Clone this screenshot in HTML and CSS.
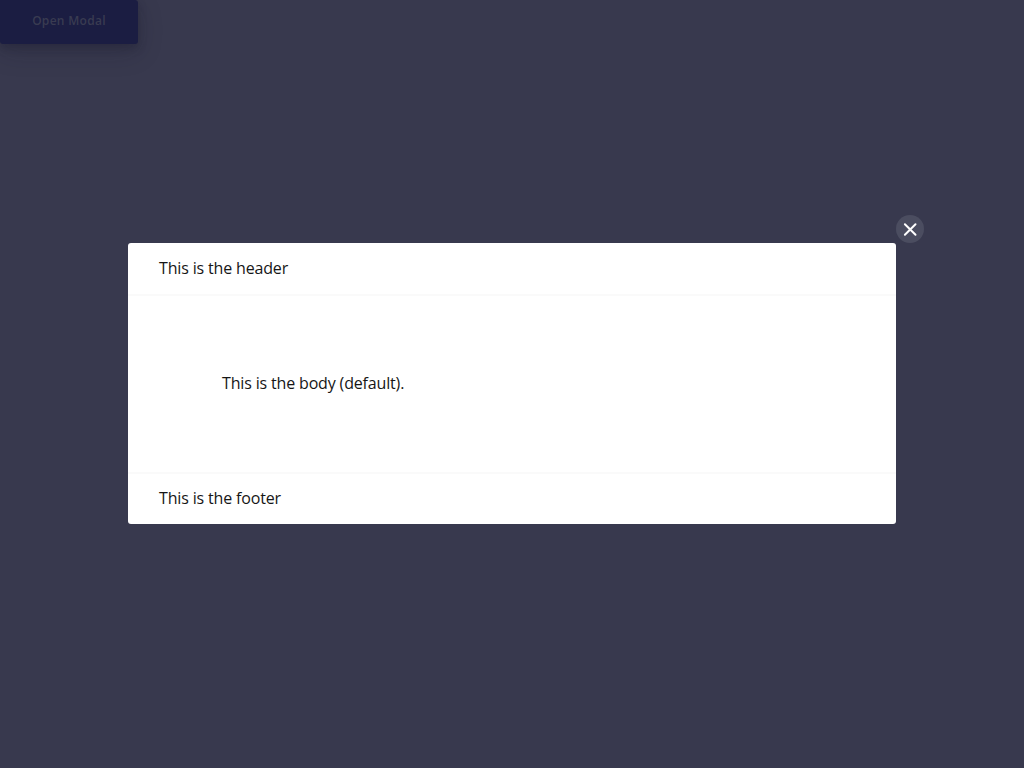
FILE: index.html
```html
<!DOCTYPE html>
<html lang="en">
<head>
<meta charset="utf-8">
<title>Modal</title>
<link rel="stylesheet" href="styles.css">
</head>
<body>
<button class="open-button">Open Modal</button>
<div class="backdrop">
  <div class="modal" role="dialog">
    <button class="close" aria-label="Close">
      <svg class="close-icon" viewBox="0 0 28 28"><path d="M8.9 9.2l10.6 10.6M19.5 9.2L8.9 19.8"/></svg>
    </button>
    <header class="modal-header">This is the header</header>
    <div class="modal-body">This is the body (default).</div>
    <footer class="modal-footer">This is the footer</footer>
  </div>
</div>
</body>
</html>
```

FILE: styles.css
```css
* { box-sizing: border-box; }
body {
  margin: 0;
  min-height: 100vh;
  background: #38394e;
  color: #161616;
  font: 16px/20px "Open Sans", "Noto Sans", sans-serif;
  letter-spacing: -.16px;
}
.open-button {
  display: block;
  width: 138px;
  height: 44px;
  padding: 0 0 3px;
  border: 0;
  border-radius: 0 3px 3px 3px;
  background: #1b1d42;
  color: #393b51;
  font: 600 12px/20px "Open Sans", sans-serif;
  letter-spacing: .3px;
  box-shadow: 0 4px 8px rgba(20, 20, 40, .25), 0 8px 26px rgba(20, 20, 40, .2);
}
.backdrop {
  position: fixed;
  inset: 0;
  display: flex;
  align-items: center;
  justify-content: center;
  padding-bottom: 1px;
}
.modal {
  position: relative;
  width: 768px;
  height: 281px;
  display: flex;
  flex-direction: column;
  border-radius: 3px;
  background: #fff;
}
.modal-header { padding: 15px 31px 16px; border-bottom: 2px solid #fafafa; }
.modal-body { flex: 1; padding: 77px 94px; border-bottom: 2px solid #fafafa; }
.modal-footer { padding: 14px 31px 16px; }
.close {
  position: absolute;
  top: -28px;
  right: -28px;
  width: 28px;
  height: 28px;
  padding: 0;
  border: 0;
  border-radius: 50%;
  background: #4b4d60;
}
.close-icon { display: block; fill: none; stroke: #fff; stroke-width: 2; stroke-linecap: round; }
```
